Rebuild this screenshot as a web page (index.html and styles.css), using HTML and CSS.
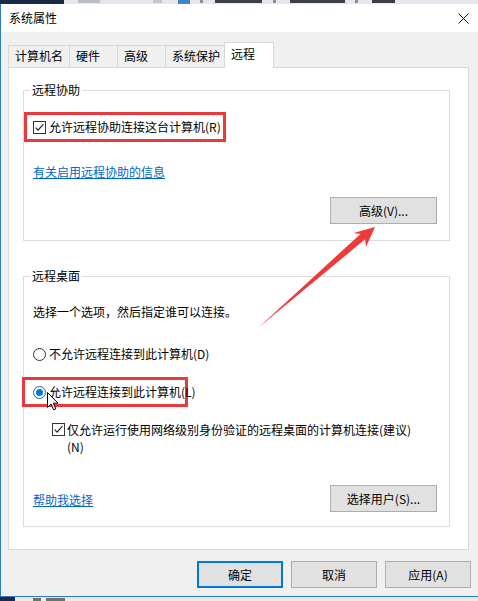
FILE: index.html
```html
<!DOCTYPE html>
<html lang="zh-CN">
<head>
<meta charset="utf-8">
<title>系统属性</title>
<link rel="stylesheet" href="styles.css">
</head>
<body>
<div class="screen">
  <svg class="strip" width="478" height="4" viewBox="0 0 478 4">
    <rect width="478" height="4" fill="#e4e7ec"/>
    <rect width="64" height="4" fill="#1b2a46"/>
    <rect x="78" y="0" width="22" height="3" fill="#b9bec6"/>
    <rect x="153" y="0" width="9" height="3" fill="#c3c7cd"/>
    <rect x="178" y="0" width="12" height="4" fill="#3d86cf"/>
    <rect x="200" y="0" width="3" height="3" fill="#8a8f96"/>
    <rect x="215" y="0" width="47" height="3" fill="#3a3f47"/>
    <rect x="273" y="0" width="3" height="3" fill="#8a8f96"/>
    <rect x="290" y="0" width="55" height="3" fill="#3a3f47"/>
    <rect x="355" y="0" width="3" height="3" fill="#8a8f96"/>
    <rect x="372" y="0" width="23" height="3" fill="#3a3f47"/>
  </svg>
  <div class="window">
    <div class="titlebar">
      <span class="title">系统属性</span>
      <svg class="close" width="11" height="11" viewBox="0 0 11 11"><path d="M0.5 0.5 L10.5 10.5 M10.5 0.5 L0.5 10.5" stroke="#111" stroke-width="1"/></svg>
    </div>
    <div class="client">
      <div class="tabs">
        <div class="tab">计算机名</div>
        <div class="tab">硬件</div>
        <div class="tab">高级</div>
        <div class="tab">系统保护</div>
        <div class="tab active">远程</div>
      </div>
      <div class="panel">
        <fieldset class="group g1">
          <legend>远程协助</legend>
          <div class="mark mark1">
            <span class="opt">
              <svg class="box" width="13" height="13" viewBox="0 0 13 13"><rect x="0.5" y="0.5" width="12" height="12" fill="#fff" stroke="#333"/><path d="M2.6 6.6 L5.1 9.1 L10.4 3.2" fill="none" stroke="#222" stroke-width="1.2"/></svg>
              <span>允许远程协助连接这台计算机(R)</span>
            </span>
          </div>
          <a class="link link1" href="#">有关启用远程协助的信息</a>
          <div class="btnrow"><button class="btn">高级(V)...</button></div>
        </fieldset>
        <fieldset class="group g2">
          <legend>远程桌面</legend>
          <div class="desc">选择一个选项，然后指定谁可以连接。</div>
          <div class="opt radio-off">
            <svg class="box" width="13" height="13" viewBox="0 0 13 13"><circle cx="6.5" cy="6.5" r="6" fill="#fff" stroke="#333"/></svg>
            <span>不允许远程连接到此计算机(D)</span>
          </div>
          <div class="mark mark2">
            <span class="opt">
              <svg class="box" width="13" height="13" viewBox="0 0 13 13"><circle cx="6.5" cy="6.5" r="6" fill="#fff" stroke="#1f5fa8"/><circle cx="6.5" cy="6.5" r="3.5" fill="#0078d7"/></svg>
              <span>允许远程连接到此计算机(L)</span>
            </span>
          </div>
          <div class="nla">
            <svg class="box nla-box" width="13" height="13" viewBox="0 0 13 13"><rect x="0.5" y="0.5" width="12" height="12" fill="#fff" stroke="#333"/><path d="M2.6 6.6 L5.1 9.1 L10.4 3.2" fill="none" stroke="#222" stroke-width="1.2"/></svg>
            <span>仅允许运行使用网络级别身份验证的远程桌面的计算机连接(建议)<br>(N)</span>
          </div>
          <div class="bottomrow">
            <a class="link link2" href="#">帮助我选择</a>
            <button class="btn">选择用户(S)...</button>
          </div>
        </fieldset>
      </div>
      <div class="footer">
        <button class="fbtn default">确定</button>
        <button class="fbtn">取消</button>
        <button class="fbtn">应用(A)</button>
      </div>
    </div>
  </div>
  <svg class="strip" width="478" height="4" viewBox="0 0 478 4">
    <rect width="478" height="4" fill="#e8eaee"/>
    <rect width="15" height="4" fill="#1b2a46"/>
    <rect x="33" y="1" width="8" height="3" fill="#6d7178"/>
    <rect x="46" y="1" width="19" height="3" fill="#6d7178"/>
  </svg>

  <svg class="arrow" width="478" height="601" viewBox="0 0 478 601">
    <polygon points="258,328 365.1,239.3 366,247 375,227 353.5,233 360.5,233.9" fill="#ee3a3a"/>
  </svg>
  <svg class="cursor" width="12" height="19" viewBox="0 0 12 19">
    <path d="M0.5 0.5 L0.5 15.5 L4 12 L6.6 17.8 L8.8 16.9 L6.3 11.2 L11 11.2 Z" fill="#fff" stroke="#000" stroke-width="1" stroke-linejoin="miter"/>
  </svg>
</div>
</body>
</html>
```

FILE: styles.css
```css
* {
  box-sizing: border-box;
}

html,
body {
  margin: 0;
  padding: 0;
}

body {
  width: 478px;
  height: 601px;
  overflow: hidden;
  background: #f0f0f0;
  color: #000;
  font: 12px/16px "Noto Sans CJK SC", "Microsoft YaHei", sans-serif;
}

.screen {
  position: relative;
  width: 478px;
  height: 601px;
  display: flex;
  flex-direction: column;
}

.strip {
  display: block;
  flex: none;
}

.window {
  flex: 1;
  display: flex;
  flex-direction: column;
  border-left: 1px solid #2f7bc4;
  border-bottom: 1px solid #2f7bc4;
}

.titlebar {
  height: 28px;
  flex: none;
  background: #fff;
  display: flex;
  align-items: center;
  justify-content: space-between;
  padding: 0 9px 0 8px;
}

.close {
  display: block;
}

.client {
  flex: 1;
  background: #f0f0f0;
  padding: 10px 9px 0 7px;
}

.tabs {
  position: relative;
  z-index: 1;
  display: flex;
  align-items: flex-end;
  height: 25px;
}

.tab {
  height: 22px;
  min-width: 48px;
  padding: 0 6px;
  border: 1px solid #d9d9d9;
  border-bottom: none;
  border-right: none;
  background: #f0f0f0;
  line-height: 20px;
  white-space: nowrap;
}

.tab.active {
  height: 26px;
  min-width: 50px;
  margin-left: -2px;
  margin-bottom: -1px;
  border-right: 1px solid #d9d9d9;
  background: #fff;
  line-height: 22px;
}

.panel {
  height: 483px;
  background: #fff;
  border: 1px solid #d9d9d9;
  padding: 14px 18px 0 14px;
}

.group {
  margin: 0;
  min-width: 0;
  border: 1px solid #dcdcdc;
  padding: 0 12px 16px 9px;
}

.group legend {
  padding: 0 2px;
  margin-left: -3px;
  line-height: 16px;
}

.g2 {
  margin-top: 27px;
  padding-bottom: 14px;
}

.mark {
  height: 30px;
  border: 3px solid #e8393c;
  display: flex;
  align-items: center;
  white-space: nowrap;
}

.mark1 {
  width: 202px;
  margin: 14px 0 0 -9px;
  padding-left: 6px;
}

.mark2 {
  width: 166px;
  margin: 15px 0 0 -11px;
  padding-left: 8px;
}

.opt {
  display: flex;
  align-items: center;
  gap: 3px;
  white-space: nowrap;
}

.box {
  display: block;
  flex: none;
}

.link {
  color: #0066cc;
  text-decoration: underline;
}

.link1 {
  display: block;
  width: max-content;
  margin-top: 22px;
}

.btnrow {
  display: flex;
  justify-content: flex-end;
  margin-top: 17px;
}

.btn {
  width: 107px;
  height: 27px;
  padding: 0;
  background: #e1e1e1;
  border: 1px solid #adadad;
  color: #000;
  font: inherit;
}

.desc {
  margin-top: 20px;
}

.radio-off {
  margin-top: 26px;
}

.nla {
  display: flex;
  align-items: flex-start;
  gap: 2px;
  margin: 14px 0 0 19px;
  line-height: 17px;
}

.nla-box {
  margin-top: 2px;
}

.bottomrow {
  display: flex;
  justify-content: space-between;
  align-items: flex-end;
  margin-top: 30px;
}

.link2 {
  margin-bottom: 4px;
}

.footer {
  display: flex;
  justify-content: flex-end;
  gap: 8px;
  margin: 11px -2px 0 0;
}

.fbtn {
  width: 86px;
  height: 27px;
  padding: 0;
  background: #e1e1e1;
  border: 1px solid #adadad;
  color: #000;
  font: inherit;
}

.fbtn.default {
  border: 2px solid #0078d7;
}

.arrow {
  position: absolute;
  left: 0;
  top: 0;
  pointer-events: none;
}

.cursor {
  position: absolute;
  left: 47px;
  top: 392px;
  pointer-events: none;
}
```
